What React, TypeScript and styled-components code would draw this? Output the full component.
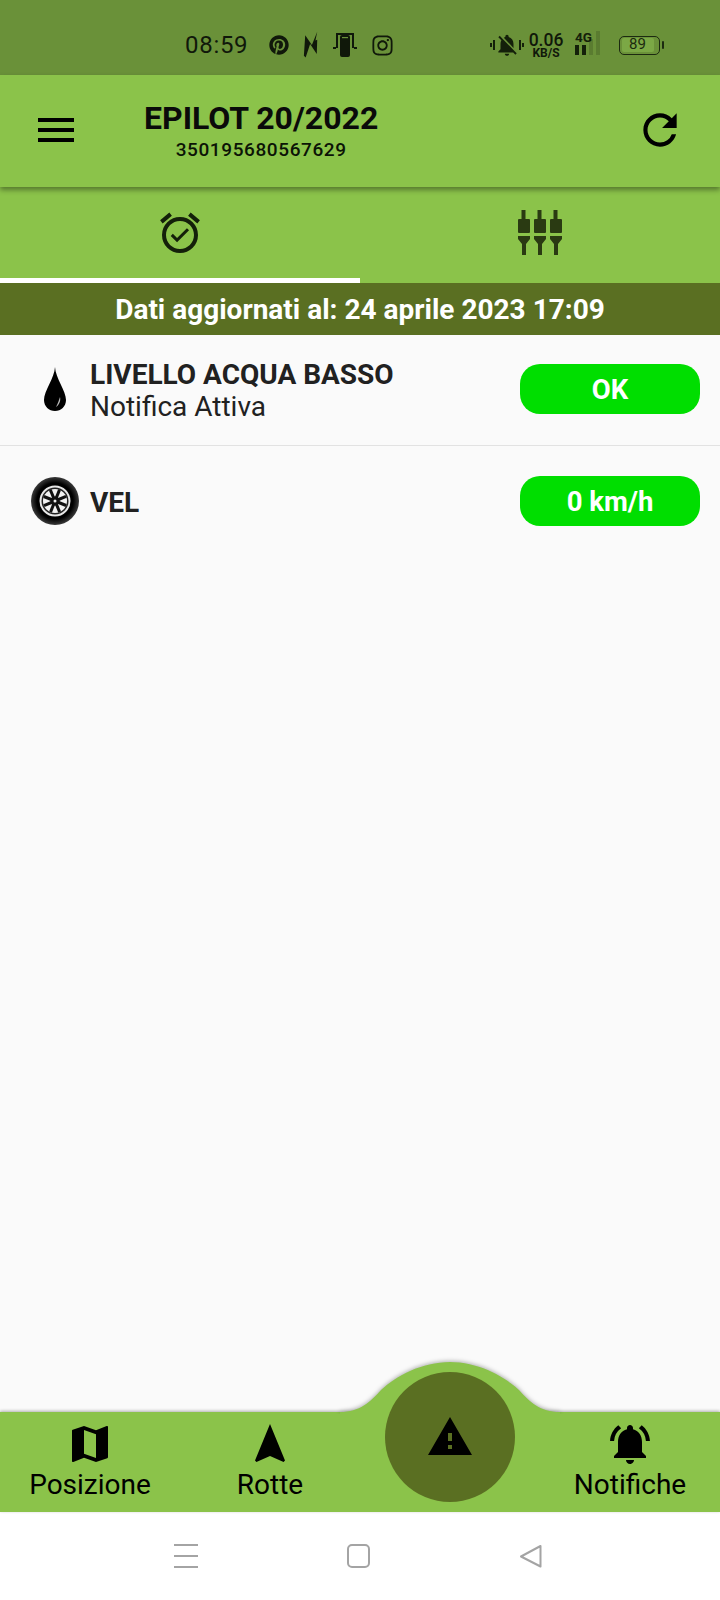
import React from "react";
import styled, { createGlobalStyle } from "styled-components";
import { MdMenu, MdRefresh, MdOutlineAlarmOn, MdMap, MdNavigation, MdNotificationsActive, MdWarning, MdNotificationsOff } from "react-icons/md";
import { FaPinterest, FaInstagram } from "react-icons/fa";

const Global = createGlobalStyle`
  html, body { margin: 0; padding: 0; background: #fff; }
  body { font-family: Roboto, "Liberation Sans", sans-serif; }
`;

const Page = styled.div`
  width: 720px;
  height: 1600px;
  display: flex;
  flex-direction: column;
  background: #fafafa;
  overflow: hidden;
`;

const StatusBar = styled.div`
  height: 75px;
  flex: none;
  background: #6a9139;
  color: #10180a;
  display: flex;
  align-items: center;
  padding: 15px 60px 0 185px;
  box-sizing: border-box;
`;

const Clock = styled.span`
  font-size: 24px;
  letter-spacing: 0.7px;
  width: 84px;
`;

const StatusApps = styled.div`
  display: flex;
  align-items: center;
  gap: 14px;
`;

const StatusRight = styled.div`
  margin-left: auto;
  display: flex;
  align-items: center;
`;

const NetSpeed = styled.div`
  display: flex;
  flex-direction: column;
  align-items: center;
  font-weight: 500;
  width: 36px;
  margin: 0 7px 0 4px;
  line-height: 1;
`;

const NetValue = styled.div`
  font-size: 17.5px;
  line-height: 16px;
`;

const NetUnit = styled.div`
  font-size: 12px;
  line-height: 11px;
  font-weight: 700;
`;

const Battery = styled.div`
  width: 41px;
  height: 19px;
  margin-left: 12px;
  border: 1.5px solid #1c2a10;
  border-radius: 5px;
  box-sizing: border-box;
  padding: 1.5px;
  position: relative;
  display: flex;
  &::after {
    content: "";
    position: absolute;
    right: -5px;
    top: 4px;
    width: 2px;
    height: 8px;
    background: #1c2a10;
    border-radius: 1px;
  }
`;

const BatteryFill = styled.div`
  width: 89%;
  background: #7ba845;
  border-radius: 2px;
  font-size: 15px;
  line-height: 13px;
  text-align: center;
  color: #1c2a10;
`;

const AppBar = styled.header`
  height: 112px;
  flex: none;
  background: #8bc34a;
  display: flex;
  align-items: flex-start;
  box-sizing: border-box;
  box-shadow: 0 3px 5px rgba(0, 0, 0, 0.38);
  position: relative;
  z-index: 2;
  color: #000;
`;

const MenuSlot = styled.div`
  width: 144px;
  padding: 31px 0 0 32px;
  box-sizing: border-box;
  display: flex;
`;

const TitleBlock = styled.div`
  display: flex;
  flex-direction: column;
  align-items: center;
  padding-top: 26px;
`;

const Title = styled.div`
  font-size: 32px;
  line-height: 34px;
  font-weight: 700;
  color: #0a0a0a;
`;

const Serial = styled.div`
  font-size: 19px;
  line-height: 24px;
  font-weight: 500;
  letter-spacing: 0.6px;
  color: #0c1406;
  margin-top: 3px;
`;

const RefreshSlot = styled.div`
  margin-left: auto;
  padding: 30px 35px 0 0;
  display: flex;
`;

const Tabs = styled.nav`
  height: 96px;
  flex: none;
  background: #8bc34a;
  display: flex;
`;

const Tab = styled.div<{ $active?: boolean }>`
  flex: 1;
  display: flex;
  align-items: center;
  justify-content: center;
  box-sizing: border-box;
  border-bottom: 5px solid ${(p) => (p.$active ? "#fff" : "transparent")};
`;

const DateBar = styled.div`
  height: 52px;
  flex: none;
  background: #5a6f22;
  color: #fff;
  font-size: 28px;
  font-weight: 700;
  display: flex;
  align-items: center;
  justify-content: center;
`;

const Content = styled.main`
  flex: 1;
  min-height: 0;
  background: #fafafa;
`;

const Row = styled.div<{ $divider?: boolean; $height: number }>`
  height: ${(p) => p.$height}px;
  display: flex;
  align-items: center;
  box-sizing: border-box;
  padding: 0 20px 2px 31px;
  border-bottom: ${(p) => (p.$divider ? "1px solid #e2e2e2" : "none")};
`;

const IconSlot = styled.div`
  width: 48px;
  flex: none;
  display: flex;
  justify-content: center;
`;

const RowText = styled.div`
  flex: 1;
  margin-left: 11px;
  padding-top: 3px;
  color: #212121;
`;

const RowTitle = styled.div`
  font-size: 28px;
  line-height: 32px;
  font-weight: 700;
`;

const RowSub = styled.div`
  font-size: 28px;
  line-height: 32px;
  font-weight: 400;
`;

const Pill = styled.div`
  width: 180px;
  height: 50px;
  border-radius: 20px;
  background: #00de00;
  color: #fff;
  font-size: 27.5px;
  font-weight: 700;
  display: flex;
  align-items: center;
  justify-content: center;
`;

const BottomBar = styled.nav`
  height: 100px;
  flex: none;
  background: #8bc34a;
  position: relative;
  display: flex;
  box-shadow: 0 -1px 3px rgba(0, 0, 0, 0.3);
`;

const Hump = styled.svg`
  position: absolute;
  left: 340px;
  top: -52px;
  overflow: visible;
  clip-path: inset(-10px -10px 0 -10px);
  filter: drop-shadow(0 -1px 2px rgba(0, 0, 0, 0.3));
`;

const Fab = styled.div`
  position: absolute;
  left: 385px;
  top: -40px;
  width: 130px;
  height: 130px;
  border-radius: 50%;
  background: #5a6f22;
  display: flex;
  align-items: center;
  justify-content: center;
  box-sizing: border-box;
`;

const NavItem = styled.div<{ $width: number }>`
  width: ${(p) => p.$width}px;
  display: flex;
  flex-direction: column;
  align-items: center;
  color: #000;
  padding-top: 8px;
  box-sizing: border-box;
  position: relative;
  font-size: 28px;
  line-height: 33px;
`;

const NavSpacer = styled.div`
  flex: 1;
`;

const SystemNav = styled.div`
  height: 88px;
  flex: none;
  background: #fff;
  display: flex;
  align-items: flex-start;
  box-sizing: border-box;
  padding: 32px 0 0 174px;
  gap: 149px;
`;

const Menu3 = styled.div`
  width: 24px;
  height: 24px;
  box-sizing: border-box;
  border-top: 2px solid #a4a4a4;
  border-bottom: 2px solid #a4a4a4;
  display: flex;
  align-items: center;
  &::before {
    content: "";
    display: block;
    width: 100%;
    height: 2px;
    background: #a4a4a4;
  }
`;

const HomeSquare = styled.div`
  width: 23px;
  height: 24px;
  box-sizing: border-box;
  border: 2px solid #a4a4a4;
  border-radius: 5px;
`;

const Slash = () => (
  <svg width="16" height="30" viewBox="0 0 18 30">
    <path d="M16 0 L14 10 L16 9 L15.5 25 L8 14 L3 29 L1 27 L2.5 4 L10 15 Z" fill="currentColor" />
  </svg>
);

const CastIcon = () => (
  <svg width="24" height="26" viewBox="0 0 24 26">
    <path d="M3 1H21V16H19V3H5V16H3Z M0 15H3V17H0Z M21 15H24V17H21Z" fill="currentColor" />
    <rect x="7" y="3" width="10" height="22" rx="2" fill="currentColor" />
    <rect x="9" y="5" width="6" height="1.2" fill="#6a9139" />
  </svg>
);

const SignalIcon = () => (
  <svg width="36" height="36" viewBox="0 0 36 36">
    <text x="4" y="15" fontFamily="Roboto, sans-serif" fontWeight="700" fontSize="13.5" fill="#14200a">4G</text>
    <rect x="4" y="18" width="4" height="10" fill="#14200a" />
    <rect x="11" y="18" width="4" height="10" fill="#14200a" />
    <rect x="18" y="12" width="4" height="16" fill="#14200a" opacity="0.18" />
    <rect x="25" y="4" width="4" height="24" fill="#14200a" opacity="0.18" />
  </svg>
);

const MutedBell = () => (
  <svg width="34" height="30" viewBox="0 0 34 30">
    <rect x="0" y="13" width="2" height="4" fill="#14200a" />
    <rect x="3" y="10" width="2" height="10" fill="#14200a" />
    <rect x="29" y="10" width="2" height="10" fill="#14200a" />
    <rect x="32" y="13" width="2" height="4" fill="#14200a" />
    <foreignObject x="4" y="2" width="26" height="26">
      <MdNotificationsOff size={26} color="#14200a" />
    </foreignObject>
  </svg>
);

const Plugs = () => (
  <svg width="46" height="46" viewBox="0 0 46 46" fill="#2a3a12">
    {[0, 16, 32].map((x) => (
      <g key={x} transform={`translate(${x} 0)`}>
        <rect x="4.5" y="0" width="4" height="10" />
        <rect x="1" y="9" width="12" height="14" rx="1" />
        <path d="M1 26 H13 V29 L9 34 V45 H5 V34 L1 29 Z" />
      </g>
    ))}
  </svg>
);

const Drop = () => (
  <svg width="24" height="46" viewBox="0 0 24 46">
    <path d="M12 1 C12.5 12 23 25 23 34 C23 40.5 18 45 12 45 C6 45 1 40.5 1 34 C1 25 11.5 12 12 1 Z" fill="#000" />
    <path d="M17 31 C18 35 16 39 13 41 C15 37 16 34 17 31 Z" fill="#bbb" />
  </svg>
);

const Wheel = () => (
  <svg width="48" height="48" viewBox="0 0 48 48">
    <defs>
      <radialGradient id="tyre" cx="0.5" cy="0.5" r="0.5">
        <stop offset="0.75" stopColor="#000" />
        <stop offset="1" stopColor="#3a3a3a" />
      </radialGradient>
    </defs>
    <circle cx="24" cy="24" r="24" fill="url(#tyre)" />
    <circle cx="24" cy="24" r="15.5" fill="#e8e8e8" />
    <circle cx="24" cy="24" r="13.5" fill="#222" />
    <circle cx="24" cy="24" r="12" fill="#f2f2f2" />
    {[0, 45, 90, 135, 180, 225, 270, 315].map((a) => (
      <rect key={a} x="22.5" y="12" width="3" height="12" fill="#111" transform={`rotate(${a + 22} 24 24)`} />
    ))}
    <circle cx="24" cy="24" r="4.5" fill="#111" />
    <circle cx="24" cy="24" r="1.5" fill="#eee" />
  </svg>
);

const BackTriangle = () => (
  <svg width="24" height="24" viewBox="0 0 24 24">
    <path d="M21.5 2 L2 12.5 L21.5 22.5 Z" fill="none" stroke="#a4a4a4" strokeWidth="2" strokeLinejoin="round" />
  </svg>
);

export default function App() {
  return (
    <Page>
      <Global />
      <StatusBar>
        <Clock>08:59</Clock>
        <StatusApps>
          <FaPinterest size={20} />
          <Slash />
          <CastIcon />
          <FaInstagram size={23} />
        </StatusApps>
        <StatusRight>
          <MutedBell />
          <NetSpeed>
            <NetValue>0.06</NetValue>
            <NetUnit>KB/S</NetUnit>
          </NetSpeed>
          <SignalIcon />
          <Battery>
            <BatteryFill>89</BatteryFill>
          </Battery>
        </StatusRight>
      </StatusBar>
      <AppBar>
        <MenuSlot>
          <MdMenu size={48} />
        </MenuSlot>
        <TitleBlock>
          <Title>EPILOT 20/2022</Title>
          <Serial>350195680567629</Serial>
        </TitleBlock>
        <RefreshSlot>
          <MdRefresh size={50} />
        </RefreshSlot>
      </AppBar>
      <Tabs>
        <Tab $active>
          <MdOutlineAlarmOn size={48} color="#14200a" />
        </Tab>
        <Tab>
          <Plugs />
        </Tab>
      </Tabs>
      <DateBar>Dati aggiornati al: 24 aprile 2023 17:09</DateBar>
      <Content>
        <Row $divider $height={111}>
          <IconSlot>
            <Drop />
          </IconSlot>
          <RowText>
            <RowTitle>LIVELLO ACQUA BASSO</RowTitle>
            <RowSub>Notifica Attiva</RowSub>
          </RowText>
          <Pill>OK</Pill>
        </Row>
        <Row $height={112}>
          <IconSlot>
            <Wheel />
          </IconSlot>
          <RowText>
            <RowTitle>VEL</RowTitle>
          </RowText>
          <Pill>0 km/h</Pill>
        </Row>
      </Content>
      <BottomBar>
        <Hump width="220" height="54" viewBox="0 0 220 54">
          <path d="M0 52 C 20 52 30 42 41 30 C 56 16 82 2 110 2 C 138 2 164 16 179 30 C 190 42 200 52 220 52 L220 54 L0 54 Z" fill="#8bc34a" />
        </Hump>
        <Fab>
          <MdWarning size={48} color="#000" />
        </Fab>
        <NavItem $width={180}>
          <MdMap size={48} />
          Posizione
        </NavItem>
        <NavItem $width={180}>
          <MdNavigation size={48} />
          Rotte
        </NavItem>
        <NavSpacer />
        <NavItem $width={180}>
          <MdNotificationsActive size={48} />
          Notifiche
        </NavItem>
      </BottomBar>
      <SystemNav>
        <Menu3 />
        <HomeSquare />
        <BackTriangle />
      </SystemNav>
    </Page>
  );
}
